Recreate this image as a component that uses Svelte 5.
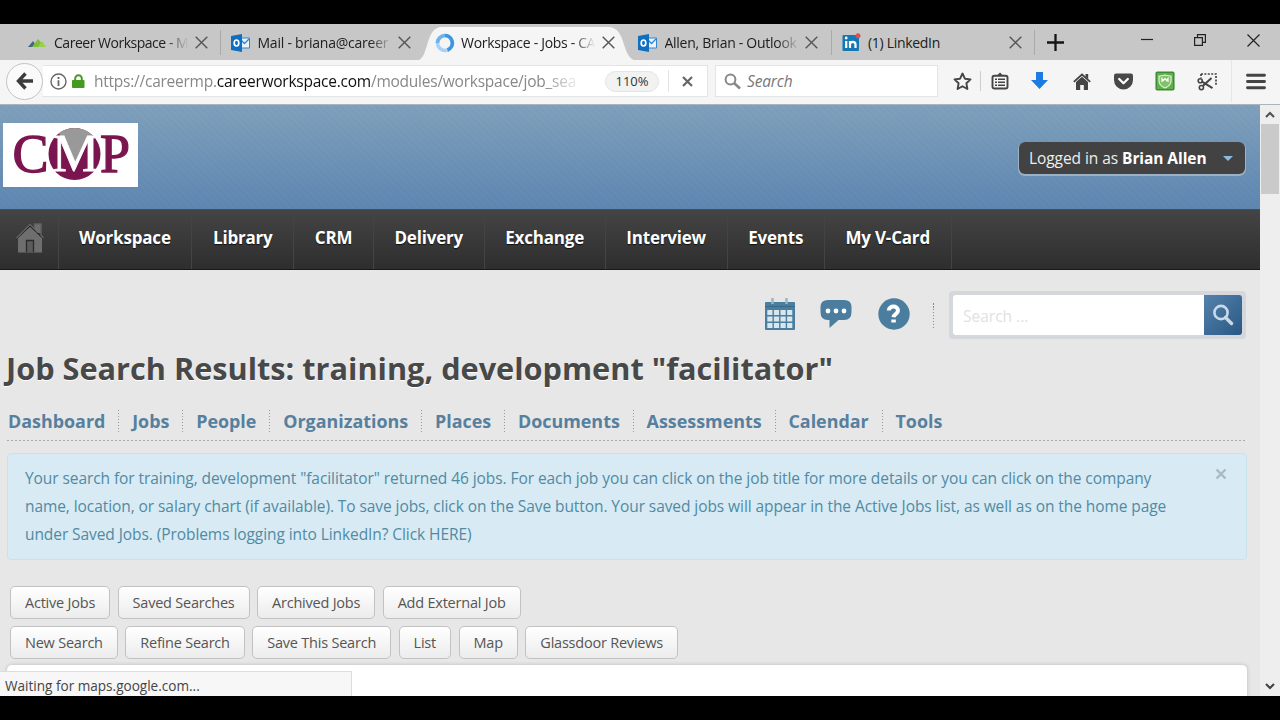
<script lang="ts">
    type Tab = {
        title: string;
        icon: "peaks" | "outlook" | "loading" | "linkedin";
        spacing: number;
        fade?: boolean;
        active?: boolean;
    };

    const tabs: Tab[] = [
        { title: "Career Workspace - M", icon: "peaks", spacing: -0.48, fade: true },
        { title: "Mail - briana@career", icon: "outlook", spacing: -0.23, fade: true },
        { title: "Workspace - Jobs - CA", icon: "loading", spacing: -0.3, fade: true, active: true },
        { title: "Allen, Brian - Outlook", icon: "outlook", spacing: -0.28, fade: true },
        { title: "(1) LinkedIn", icon: "linkedin", spacing: -0.3 },
    ];

    const mainNav = ["Workspace", "Library", "CRM", "Delivery", "Exchange", "Interview", "Events", "My V-Card"];

    const subNav = [
        "Dashboard",
        "Jobs",
        "People",
        "Organizations",
        "Places",
        "Documents",
        "Assessments",
        "Calendar",
        "Tools",
    ];

    const buttonRows = [
        ["Active Jobs", "Saved Searches", "Archived Jobs", "Add External Job"],
        ["New Search", "Refine Search", "Save This Search", "List", "Map", "Glassdoor Reviews"],
    ];

    let search = $state("");
    let showAlert = $state(true);
</script>

<div class="screen">
    <div class="tabstrip">
        {#each tabs as tab}
            <div class="tab" class:active={tab.active}>
                {#if tab.active}
                    <svg class="tab-shape" width="222" height="34" viewBox="0 0 222 34">
                        <path d="M0 34 C14 33 8 0 26 0 H192 C212 0 204 33 222 34Z" fill="#f5f5f5" />
                    </svg>
                {/if}
                <span class="favicon">
                    {#if tab.icon === "peaks"}
                        <svg width="18" height="18" viewBox="0 0 18 18">
                            <path d="M0 13 5 7 9 13Z" fill="#42658a" />
                            <path d="M4 13 10 5 17 13Z" fill="#80bd3c" />
                            <path d="M10 13 14 7 18 13Z" fill="#9ad14a" />
                        </svg>
                    {:else if tab.icon === "outlook"}
                        <svg width="20" height="18" viewBox="0 0 20 18">
                            <path d="M9 4h9.500v10H9z" fill="#e8f3fb" stroke="#2f86cf" />
                            <path d="m9 5 4.500 4.500L18 5" fill="none" stroke="#2f86cf" stroke-width="1.300" />
                            <path d="M0 2 11 0V18L0 16Z" fill="#0f6fc0" />
                            <ellipse cx="5.500" cy="9" rx="2.300" ry="3" fill="none" stroke="#fff" stroke-width="1.700" />
                        </svg>
                    {:else if tab.icon === "loading"}
                        <svg width="20" height="20" viewBox="0 0 20 20">
                            <circle cx="10" cy="10" r="7.500" fill="none" stroke="#a8d2f5" stroke-width="3.600" />
                            <path d="M10 2.500A7.500 7.500 0 0 1 12.500 17" fill="none" stroke="#3f94e0" stroke-width="3.600" />
                            <path d="M2.500 10A7.500 7.500 0 0 1 10 2.500" fill="none" stroke="#6db3ee" stroke-width="3.600" />
                        </svg>
                    {:else}
                        <svg width="19" height="19" viewBox="0 0 19 19">
                            <rect x="0.500" y="2" width="16.500" height="16" rx="1" fill="#1478b5" />
                            <path d="M4.200 8v7M8 15V8M8 11.500C8 8 13.500 8 13.500 11.500V15" fill="none" stroke="#fff" stroke-width="2.200" />
                            <circle cx="4.200" cy="5" r="1.400" fill="#fff" />
                            <circle cx="16" cy="2.800" r="2.500" fill="#e04e52" />
                        </svg>
                    {/if}
                </span>
                <span class="tab-title" class:fade={tab.fade} style="letter-spacing: {tab.spacing}px">{tab.title}</span>
                <svg class="tab-close" width="13" height="13" viewBox="0 0 13 13">
                    <path d="m.700.700 11.600 11.600M12.300.700.700 12.300" stroke="#555" stroke-width="1.400" />
                </svg>
            </div>
        {/each}
        <svg class="new-tab" width="17" height="17" viewBox="0 0 17 17">
            <path d="M8.500 0v17M0 8.500h17" stroke="#151515" stroke-width="2.300" />
        </svg>
        <div class="window-controls">
            <svg width="12" height="14" viewBox="0 0 12 14"><path d="M0 6.500h12" stroke="#222" stroke-width="1.200" /></svg>
            <svg width="12" height="12" viewBox="0 0 12 12">
                <path d="M.600 3.600h7.800v7.800H.600zM3.500 3.500V.600h7.900v7.800h-3" fill="none" stroke="#222" stroke-width="1.200" />
            </svg>
            <svg width="13" height="13" viewBox="0 0 13 13"><path d="m.500.500 12 12m0-12-12 12" stroke="#222" stroke-width="1.200" /></svg>
        </div>
    </div>

    <div class="toolbar">
        <button class="back" aria-label="Back">
            <svg width="18" height="18" viewBox="0 0 18 18">
                <path d="M9.500 1.500 2.500 9l7 7.500M2.500 9H17" fill="none" stroke="#3c3c3c" stroke-width="3.400" />
            </svg>
        </button>
        <div class="urlbar">
            <svg width="17" height="17" viewBox="0 0 17 17">
                <circle cx="8.500" cy="8.500" r="7.500" fill="none" stroke="#666" stroke-width="1.400" />
                <path d="M8.500 7.300V13M8.500 4v2" stroke="#666" stroke-width="1.800" />
            </svg>
            <svg class="lock" width="13" height="15" viewBox="0 0 13 15">
                <path d="M3.200 7V4.500a3.300 3.300 0 0 1 6.600 0V7" fill="none" stroke="#459a20" stroke-width="2" />
                <rect y="6" width="12.500" height="8" rx=".8" fill="#459a20" />
            </svg>
            <span class="url">https://careermp.<b>careerworkspace.com</b>/modules/workspace/job_sea</span>
            <span class="zoom">110%</span>
            <span class="stop">
                <svg width="11" height="11" viewBox="0 0 11 11"><path d="m1 1 9 9m0-9-9 9" stroke="#666" stroke-width="2.200" /></svg>
            </span>
        </div>
        <div class="searchbar">
            <svg width="17" height="17" viewBox="0 0 17 17">
                <circle cx="6.500" cy="6.500" r="4.900" fill="none" stroke="#888" stroke-width="2" />
                <path d="m10 10 6 5.500" stroke="#888" stroke-width="2.600" />
            </svg>
            <span>Search</span>
        </div>
        <div class="tools">
            <span class="tool star">
                <svg width="19" height="19" viewBox="0 0 19 19">
                    <path d="m9.500 1.500 2.400 5.200 5.600.7-4.100 3.900 1 5.700-4.900-2.800L4.600 17l1-5.700-4.100-3.900 5.600-.700Z" fill="none" stroke="#444" stroke-width="1.900" stroke-linejoin="round" />
                </svg>
            </span>
            <span class="tool list">
                <svg width="18" height="18" viewBox="0 0 18 18">
                    <path d="M6 3.500 9 .500l3 3" fill="#444" />
                    <rect x="1.500" y="3.800" width="15" height="12.700" rx="1.800" fill="none" stroke="#444" stroke-width="1.900" />
                    <path d="M4 7.300h2m1 0h7M4 10.300h2m1 0h7M4 13.300h2m1 0h7" stroke="#444" stroke-width="1.500" />
                </svg>
            </span>
            <span class="tool">
                <svg width="17" height="18" viewBox="0 0 17 18"><path d="M5 0h7v8h5l-8.500 9L0 8h5Z" fill="#1c7ce0" /></svg>
            </span>
            <span class="tool">
                <svg width="18" height="17" viewBox="0 0 18 17">
                    <path d="M.800 8.800 9 1.500l8.200 7.300" fill="none" stroke="#444" stroke-width="1.800" />
                    <path d="M12.500 1h2.700v5l-2.700-2.200Z" fill="#444" />
                    <path d="m3 9 6-5.300L15 9v8h-4.200v-5H7.200v5H3Z" fill="#444" />
                </svg>
            </span>
            <span class="tool">
                <svg width="19" height="17" viewBox="0 0 19 17">
                    <path d="M2 .500h15q2 0 2 2V7a9.500 9.500 0 0 1-19 0V2.500q0-2 2-2Z" fill="#484848" />
                    <path d="m5.200 6 4.300 4.200L13.800 6" fill="none" stroke="#fff" stroke-width="2.300" stroke-linecap="round" stroke-linejoin="round" />
                </svg>
            </span>
            <span class="tool">
                <svg width="20" height="20" viewBox="0 0 20 20">
                    <rect x="1.200" y="1.200" width="17.600" height="17.600" rx="1" fill="#62ad4c" stroke="#3c8c34" stroke-width="1.500" />
                    <path d="M4 5q3 0 6-1 3 1 6 1v5q0 4.500-6 7Q4 14.500 4 10Z" fill="#7fc46b" stroke="#dff2d8" stroke-width="1.200" />
                    <path d="M7 11V7.500l1.500 2 1.500-2 1.500 2 1.500-2V11" fill="none" stroke="#fff" stroke-width="1.200" />
                </svg>
            </span>
            <span class="tool">
                <svg width="20" height="19" viewBox="0 0 20 19">
                    <path d="M4 2h15v11M4 2v4" fill="none" stroke="#444" stroke-width="1.700" stroke-dasharray="2 1.400" />
                    <circle cx="3.200" cy="8.800" r="2" fill="none" stroke="#444" stroke-width="1.600" />
                    <circle cx="4.400" cy="15.600" r="2.100" fill="none" stroke="#444" stroke-width="1.600" />
                    <path d="m5 9.700 10.500 6.500M5.800 13.900 14.500 6" stroke="#444" stroke-width="2" />
                </svg>
            </span>
        </div>
        <div class="menu">
            <svg width="20" height="17" viewBox="0 0 20 17">
                <path d="M1.500 2.300h17M1.500 8.500h17M1.500 14.700h17" stroke="#444" stroke-width="2.900" stroke-linecap="round" />
            </svg>
        </div>
    </div>

    <div class="viewport">
        <div class="page">
            <header>
                <svg class="logo" width="135" height="64" viewBox="0 0 135 64">
                    <rect width="135" height="64" fill="#fff" />
                    <clipPath id="disc"><circle cx="71.500" cy="31" r="26" /></clipPath>
                    <g clip-path="url(#disc)">
                        <rect x="45" y="4" width="53" height="54" fill="#7b1550" />
                        <path d="M52 3h42L73 42Z" fill="#999" />
                    </g>
                    <g font-family="Liberation Serif, serif" fill="#7b1550" stroke="#7b1550" stroke-width="1.300">
                        <text x="9.500" y="48.500" font-size="55" textLength="36" lengthAdjust="spacingAndGlyphs">C</text>
                        <text x="97" y="48.500" font-size="55" textLength="30" lengthAdjust="spacingAndGlyphs">P</text>
                        <text x="49" y="48" font-size="53" textLength="47" lengthAdjust="spacingAndGlyphs" fill="#fff" stroke="#fff" stroke-width="0.800">M</text>
                    </g>
                </svg>
                <button class="account">
                    <span>Logged in as <b>Brian Allen</b></span>
                    <i></i>
                </button>
            </header>

            <nav class="main-nav">
                <span class="home">
                    <svg width="28" height="30" viewBox="0 0 28 30">
                        <path d="M19 1h6v9h-6z" fill="#6e6e6e" />
                        <path d="M2 15v14.500h24V15L14 4Z" fill="#6e6e6e" />
                        <path d="M1 15.500 14 3l13 12.500" fill="none" stroke="#222" />
                        <path d="M.500 15 14 1.500l4.500 4.500V1H25v11l2.500 3" fill="none" stroke="#626262" stroke-width="1.500" />
                        <path d="M10.500 29V17.500h7V29" fill="#5c5c5c" stroke="#2b2b2b" stroke-width="1.300" />
                    </svg>
                </span>
                {#each mainNav as item}
                    <span class="nav-item">{item}</span>
                {/each}
            </nav>

            <div class="quick">
                <svg width="30" height="34" viewBox="0 0 30 34">
                    <path d="M1 5h28q1 0 1 1v26q0 1-1 1H1q-1 0-1-1V6q0-1 1-1Z" fill="#4a7d9e" />
                    <path d="M7.500 1v6M21.500 1v6" stroke="#9cb6c6" stroke-width="2.500" />
                    <path d="M0 9.500h30" stroke="#386883" />
                    <g fill="#d8e7ee">
                        {#each [13, 19.5, 26] as y}
                            {#each [2.3, 8.9, 15.5, 22.1] as x}
                                <rect {x} {y} width="5.200" height="5" />
                            {/each}
                        {/each}
                    </g>
                </svg>
                <svg width="32" height="30" viewBox="0 0 32 30">
                    <path d="M8 1h16q7.500 0 7.500 7v5q0 8-7.500 8h-5.500L9.500 29v-8H8Q.500 21 .500 13V8Q.500 1 8 1Z" fill="#4a7d9e" />
                    <g fill="#fff"><circle cx="8" cy="12" r="2.400" /><circle cx="16" cy="12" r="2.400" /><circle cx="24" cy="12" r="2.400" /></g>
                </svg>
                <svg width="32" height="32" viewBox="0 0 32 32">
                    <circle cx="16" cy="16" r="15.700" fill="#4a7d9e" />
                    <path d="M10.800 12.500C10.800 7.200 20 7.200 20 12.500 20 16 16 15.500 15.500 19.300" fill="none" stroke="#fff" stroke-width="4" />
                    <path d="M13.300 21.500h4.500v3h-4.500z" fill="#fff" />
                </svg>
                <span class="divider"></span>
                <div class="site-search">
                    <input placeholder="Search ..." bind:value={search} />
                    <button aria-label="Search">
                        <svg width="22" height="22" viewBox="0 0 22 22">
                            <circle cx="9" cy="8.500" r="6.600" fill="none" stroke="#c9d9e8" stroke-width="2.600" />
                            <path d="m13.500 13.500 6 6" stroke="#c9d9e8" stroke-width="3.400" stroke-linecap="round" />
                        </svg>
                    </button>
                </div>
            </div>

            <h1>Job Search Results: training, development "facilitator"</h1>

            <nav class="sub-nav">
                {#each subNav as item}
                    <span>{item}</span>
                {/each}
            </nav>

            {#if showAlert}
                <div class="alert">
                    <p>
                        Your search for training, development "facilitator" returned 46 jobs. For each job you can click on the job title for more details or you can click on the company<br />
                        name, location, or salary chart (if available). To save jobs, click on the Save button. Your saved jobs will appear in the Active Jobs list, as well as on the home page<br />
                        under Saved Jobs. (Problems logging into LinkedIn? Click HERE)
                    </p>
                    <button aria-label="Dismiss" onclick={() => (showAlert = false)}>
                        <svg width="12" height="12" viewBox="0 0 12 12"><path d="m1.500 1.500 9 9m0-9-9 9" stroke="#a9bac2" stroke-width="2.400" /></svg>
                    </button>
                </div>
            {/if}

            <div class="actions">
                {#each buttonRows as row}
                    <div class="row">
                        {#each row as label}
                            <button>{label}</button>
                        {/each}
                    </div>
                {/each}
            </div>

            <div class="panel"></div>
        </div>

        <div class="scrollbar">
            <svg width="10" height="7" viewBox="0 0 10 7"><path d="m1 6 4-4 4 4" fill="none" stroke="#505050" stroke-width="2" /></svg>
            <div class="thumb"></div>
            <svg width="10" height="7" viewBox="0 0 10 7"><path d="m1 1 4 4 4-4" fill="none" stroke="#404040" stroke-width="2" /></svg>
        </div>

        <div class="status">Waiting for maps.google.com...</div>
    </div>
</div>

<style>
    :global(body) {
        background: #000;
    }

    .screen {
        width: 1280px;
        height: 720px;
        box-sizing: border-box;
        padding: 24px 0;
        background: #000;
        font-family: "Open Sans", "Noto Sans", sans-serif;
        overflow: hidden;
    }

    .screen * {
        box-sizing: border-box;
    }

    svg {
        display: block;
        flex: none;
    }

    button {
        font: inherit;
        padding: 0;
        border: 0;
    }

    /* Browser chrome */
    .tabstrip {
        display: flex;
        height: 36px;
        padding-left: 17.5px;
        background: #c7c7c7;
    }

    .tab {
        position: relative;
        display: flex;
        align-items: center;
        width: 203.5px;
        height: 37px;
        padding: 0 13px 0 10px;
        flex: none;
    }

    .tab:nth-child(1)::after,
    .tab:nth-child(4)::after,
    .tab:nth-child(5)::after {
        content: "";
        position: absolute;
        right: 0;
        top: 6px;
        width: 1px;
        height: 25px;
        background: #aaa;
    }

    .tab-shape {
        position: absolute;
        left: -9px;
        top: 3px;
    }

    .favicon {
        position: relative;
        width: 26.5px;
        flex: none;
    }

    .tab-title {
        position: relative;
        width: 137px;
        white-space: nowrap;
        font-size: 14px;
        color: #202020;
    }

    .tab-title.fade {
        mask-image: linear-gradient(90deg, #000 82%, transparent 98%);
    }

    .tab-close {
        position: relative;
        margin-left: 3.5px;
    }

    .new-tab {
        margin: 10px 0 0 12px;
    }

    .window-controls {
        display: flex;
        align-items: center;
        gap: 41px;
        height: 32px;
        margin-left: 76.5px;
    }

    .toolbar {
        display: flex;
        align-items: center;
        height: 45px;
        padding: 0 0 2px 6px;
        background: #f5f5f5;
        border-bottom: 1px solid #a9b4bb;
    }

    .back {
        display: grid;
        place-items: center;
        width: 37px;
        height: 37px;
        border: 1px solid #c3c3c3;
        border-radius: 50%;
        background: #fafafa;
        flex: none;
    }

    .urlbar {
        display: flex;
        align-items: center;
        width: 665px;
        height: 32px;
        padding-left: 7px;
        background: #fff;
        border: solid #e4e4e4;
        border-width: 1px 1px 1px 0;
        flex: none;
    }

    .lock {
        margin: 0 9px 0 5px;
    }

    .url {
        width: 488px;
        white-space: nowrap;
        font-size: 15.5px;
        letter-spacing: -0.24px;
        color: #888;
        mask-image: linear-gradient(90deg, #000 92%, transparent);
    }

    .url b {
        font-weight: 400;
        color: #111;
    }

    .zoom {
        width: 54px;
        height: 21px;
        margin-left: 23px;
        border: 1px solid #e4e4e4;
        border-radius: 11px;
        background: #f2f2f2;
        font-size: 13px;
        line-height: 19px;
        text-align: center;
        color: #333;
    }

    .stop {
        display: grid;
        place-items: center;
        flex: 1;
        height: 22px;
        margin-left: 9px;
        padding-right: 1px;
        border-left: 1px solid #e4e4e4;
    }

    .searchbar {
        display: flex;
        align-items: center;
        gap: 6px;
        width: 223px;
        height: 32px;
        margin-left: 7px;
        padding-left: 8px;
        background: #fff;
        border: 1px solid #e4e4e4;
        font-size: 15.5px;
        font-style: italic;
        letter-spacing: -0.15px;
        color: #777;
        flex: none;
    }

    .tools {
        display: flex;
        align-items: center;
        margin-left: 6px;
    }

    .tool {
        display: grid;
        place-items: center;
        width: 41.7px;
        height: 20px;
    }

    .tool.star {
        width: 37px;
        border-right: 1px solid #ccc;
    }

    .tool.list {
        width: 38px;
    }

    .menu {
        display: grid;
        place-items: center;
        width: 49px;
        height: 42px;
        margin-left: auto;
        border-left: 1px solid #e6e6e6;
    }

    /* Page */
    .viewport {
        position: relative;
        display: flex;
        height: 591px;
    }

    .page {
        display: flex;
        flex-direction: column;
        width: 1260px;
        height: 591px;
        background: #e7e7e7;
        overflow: hidden;
    }

    header {
        display: flex;
        align-items: flex-start;
        justify-content: space-between;
        height: 104px;
        padding: 18px 15px 0 3px;
        background:
            repeating-linear-gradient(45deg, rgba(255, 255, 255, 0.02) 0 2px, transparent 2px 5px),
            linear-gradient(#7e9fbb, #5c85b0);
        flex: none;
    }

    .account {
        display: flex;
        align-items: center;
        justify-content: space-between;
        width: 226px;
        height: 32px;
        margin-top: 19px;
        padding: 0 12px 0 10px;
        border-radius: 6px;
        background: #424242;
        box-shadow: 0 1px 0 1px rgba(190, 200, 205, 0.6);
        color: #eee;
        font-size: 15.5px;
        letter-spacing: -0.07px;
    }

    .account b {
        color: #fff;
    }

    .account i {
        border: 5.5px solid transparent;
        border-top-color: #8bbbe2;
        border-bottom: 0;
    }

    .main-nav {
        display: flex;
        height: 61px;
        background: linear-gradient(#444, #2e2e2e);
        border-top: 1px solid #4c4c4c;
        border-bottom: 1px solid #181818;
        color: #fff;
        font-size: 17px;
        font-weight: 700;
        letter-spacing: -0.19px;
        line-height: 56px;
        flex: none;
    }

    .home {
        width: 58.5px;
        padding: 13px 0 0 16px;
        border-right: 1px solid #444;
    }

    .nav-item {
        padding: 0 20.7px 0 20.5px;
        border-right: 1px solid #444;
        text-shadow: 0 1px 1px #111;
    }

    .quick {
        display: flex;
        align-items: center;
        height: 90px;
        padding: 0 14px 0 765px;
        flex: none;
    }

    .quick > svg {
        margin: -2px 26px 0 0;
    }

    .quick > svg:nth-child(1) {
        margin-right: 25px;
    }

    .quick > svg:nth-child(3) {
        margin-right: 23px;
    }

    .divider {
        width: 1px;
        height: 25px;
        margin-top: 1px;
        background: repeating-linear-gradient(#888 0 1.5px, transparent 1.5px 3px);
    }

    .site-search {
        display: flex;
        width: 297px;
        height: 48px;
        margin-left: auto;
        padding: 4px;
        border-radius: 4px;
        background: #d4d7db;
    }

    .site-search input {
        width: 251px;
        height: 40px;
        padding: 2px 10px 0;
        border: 0;
        border-radius: 3px 0 0 3px;
        background: #fff;
        font: 15.5px "Open Sans", sans-serif;
    }

    .site-search input::placeholder {
        color: #dfe1e3;
    }

    .site-search button {
        display: grid;
        place-items: center;
        width: 38px;
        height: 40px;
        border-radius: 0 3px 3px 0;
        background: linear-gradient(135deg, #5582ad, #295884);
    }

    h1 {
        height: 47px;
        margin: 0 0 0 6px;
        font-size: 30.68px;
        font-weight: 700;
        line-height: 17px;
        color: #484848;
        text-shadow: 0 1px 0 #fff;
        white-space: nowrap;
        flex: none;
    }

    .sub-nav {
        display: flex;
        height: 34px;
        margin: 0 13px 0 7px;
        background: repeating-linear-gradient(90deg, #aaa 0 2px, transparent 2px 4px) bottom / 100% 1.5px no-repeat;
        color: #56809e;
        font-size: 17.9px;
        font-weight: 700;
        line-height: 22px;
        flex: none;
    }

    .sub-nav span {
        height: 22px;
        margin-top: 3px;
        padding: 0 13px 0 12.8px;
        background: repeating-linear-gradient(#999 0 1.5px, transparent 1.5px 3px) right / 1px 100% no-repeat;
        border-right: 1px solid transparent;
        background-origin: border-box;
    }

    .sub-nav span:first-child {
        padding-left: 1px;
    }

    .sub-nav span:last-child {
        background: none;
    }

    .alert {
        display: flex;
        justify-content: space-between;
        align-items: flex-start;
        height: 107px;
        margin: 12px 13px 0 7px;
        padding: 10px 19px 0 17px;
        border: 1px solid #c9e3ed;
        border-radius: 4px;
        background: #d8eaf4;
        color: #508aa3;
        font-size: 15.5px;
        letter-spacing: -0.075px;
        line-height: 28px;
        white-space: nowrap;
        flex: none;
    }

    .alert p {
        margin: 0;
    }

    .alert button {
        margin-top: 4px;
        background: none;
    }

    .actions {
        display: flex;
        flex-direction: column;
        gap: 7px;
        padding: 26px 0 0 10px;
    }

    .row {
        display: flex;
        gap: 7.5px;
    }

    .row button {
        height: 33px;
        padding: 0 14px;
        border: 1px solid #c2c2c2;
        border-radius: 5px;
        background: linear-gradient(#fff, #ececec);
        color: #555;
        font-size: 14.5px;
        letter-spacing: -0.22px;
        line-height: 30px;
    }

    .panel {
        height: 40px;
        margin: 6px 13px 0 7px;
        border-radius: 5px 5px 0 0;
        background: #fff;
        box-shadow: 0 0 4px rgba(0, 0, 0, 0.2);
        flex: none;
    }

    .scrollbar {
        display: flex;
        flex-direction: column;
        align-items: center;
        width: 20px;
        padding: 6px 0 6px;
        background: #eee;
    }

    .thumb {
        width: 18px;
        height: 70px;
        margin: 6px 0 auto;
        background: #cacaca;
    }

    .status {
        position: absolute;
        left: 0;
        bottom: 0;
        width: 352px;
        height: 25px;
        padding-left: 5px;
        border: solid #ddd;
        border-width: 1px 1px 0 0;
        background: #f7f7f7;
        color: #444;
        font-size: 13.57px;
        line-height: 27px;
    }
</style>
